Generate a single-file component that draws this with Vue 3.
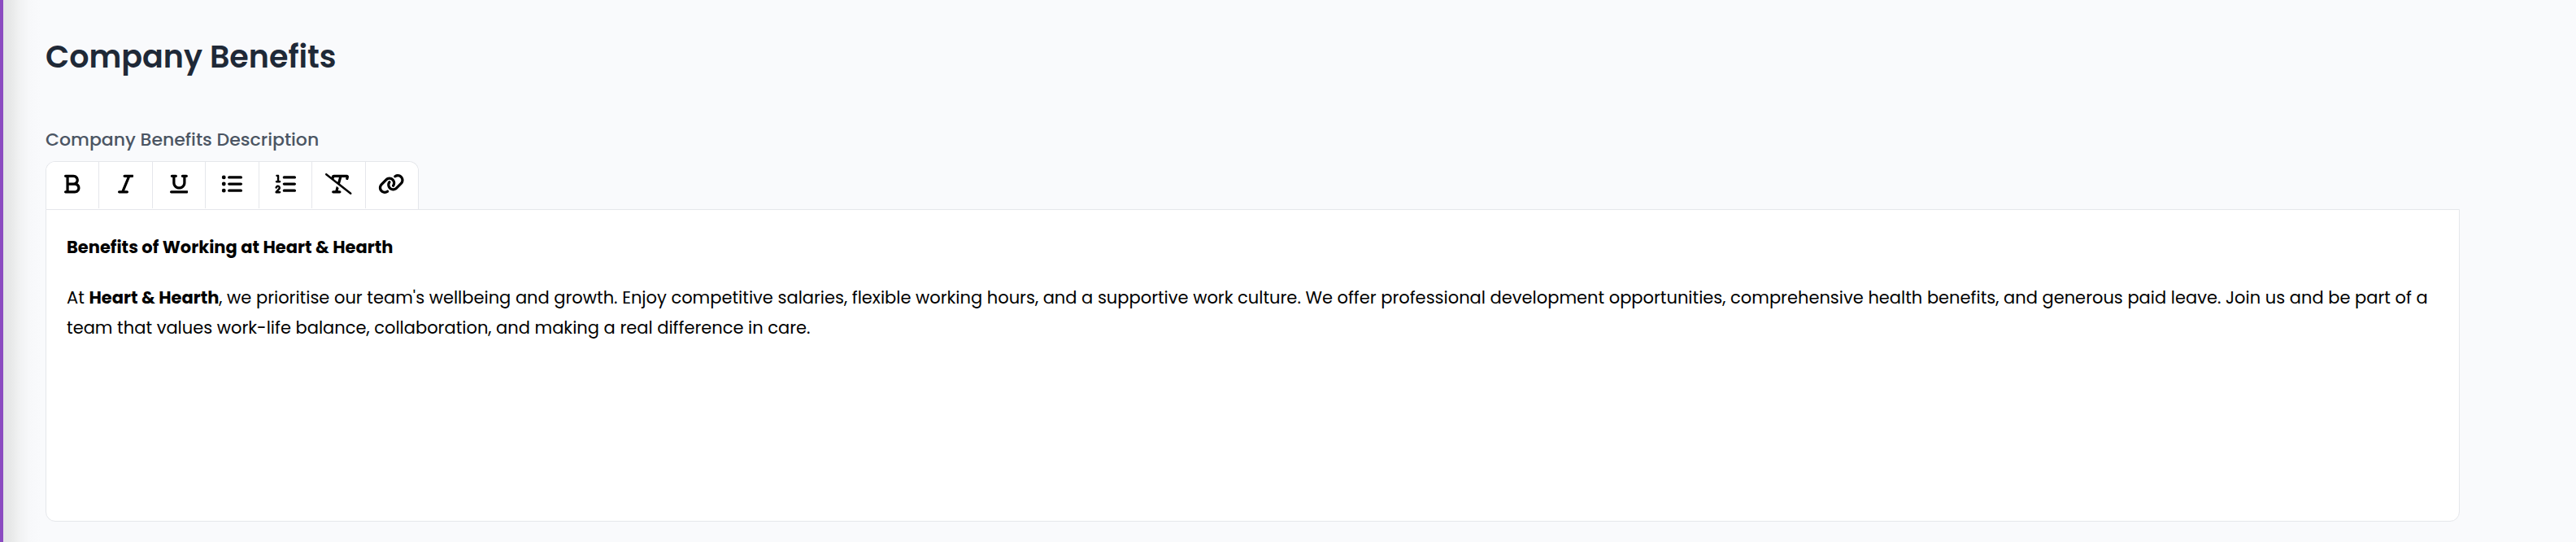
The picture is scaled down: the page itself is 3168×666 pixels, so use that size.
<script setup>
const tools = [
  {
    name: 'Bold',
    width: 384,
    d: 'M0 64C0 46.3 14.3 32 32 32H80 96 224c70.7 0 128 57.3 128 128c0 31.3-11.3 60.1-30 82.3c37.1 22.4 62 63.1 62 109.7c0 70.7-57.3 128-128 128H96 80 32c-17.7 0-32-14.3-32-32s14.3-32 32-32H48V256 96H32C14.3 96 0 81.7 0 64zM224 224c35.3 0 64-28.7 64-64s-28.7-64-64-64H112V224H224zM112 288V416H256c35.3 0 64-28.7 64-64s-28.7-64-64-64H224 112z',
  },
  {
    name: 'Italic',
    width: 384,
    d: 'M128 64c0-17.7 14.3-32 32-32H352c17.7 0 32 14.3 32 32s-14.3 32-32 32H293.3L160 416h64c17.7 0 32 14.3 32 32s-14.3 32-32 32H32c-17.7 0-32-14.3-32-32s14.3-32 32-32H90.7L224 96H160c-17.7 0-32-14.3-32-32z',
  },
  {
    name: 'Underline',
    width: 448,
    d: 'M16 64c0-17.7 14.3-32 32-32h96c17.7 0 32 14.3 32 32s-14.3 32-32 32H128V224c0 53 43 96 96 96s96-43 96-96V96H304c-17.7 0-32-14.3-32-32s14.3-32 32-32h96c17.7 0 32 14.3 32 32s-14.3 32-32 32H384V224c0 88.4-71.6 160-160 160s-160-71.6-160-160V96H48C30.3 96 16 81.7 16 64zM0 448c0-17.7 14.3-32 32-32H416c17.7 0 32 14.3 32 32s-14.3 32-32 32H32c-17.7 0-32-14.3-32-32z',
  },
  {
    name: 'Bulleted list',
    width: 512,
    d: 'M64 144a48 48 0 1 0 0-96 48 48 0 1 0 0 96zM192 64c-17.7 0-32 14.3-32 32s14.3 32 32 32H480c17.7 0 32-14.3 32-32s-14.3-32-32-32H192zm0 160c-17.7 0-32 14.3-32 32s14.3 32 32 32H480c17.7 0 32-14.3 32-32s-14.3-32-32-32H192zm0 160c-17.7 0-32 14.3-32 32s14.3 32 32 32H480c17.7 0 32-14.3 32-32s-14.3-32-32-32H192zM64 464a48 48 0 1 0 0-96 48 48 0 1 0 0 96zm48-208a48 48 0 1 0-96 0 48 48 0 1 0 96 0z',
  },
  {
    name: 'Numbered list',
    width: 512,
    d: 'M24 56c0-13.3 10.7-24 24-24H80c13.3 0 24 10.7 24 24V176h16c13.3 0 24 10.7 24 24s-10.7 24-24 24H40c-13.3 0-24-10.7-24-24s10.7-24 24-24H56V80H48C34.7 80 24 69.3 24 56zM86.7 341.2c-6.5-7.4-18.3-6.9-24 1.2L51.5 357.9c-7.7 10.8-22.7 13.3-33.5 5.6s-13.3-22.7-5.6-33.5l11.1-15.6c23.7-33.2 72.3-35.6 99.2-4.9c21.3 24.4 20.8 60.9-1.1 84.7L86.8 432H120c13.3 0 24 10.7 24 24s-10.7 24-24 24H32c-9.5 0-18.2-5.6-22-14.4s-2.1-18.9 4.3-25.9l72-78c5.3-5.8 5.4-14.6 .3-20.5zM224 64H480c17.7 0 32 14.3 32 32s-14.3 32-32 32H224c-17.7 0-32-14.3-32-32s14.3-32 32-32zm0 160H480c17.7 0 32 14.3 32 32s-14.3 32-32 32H224c-17.7 0-32-14.3-32-32s14.3-32 32-32zm0 160H480c17.7 0 32 14.3 32 32s-14.3 32-32 32H224c-17.7 0-32-14.3-32-32s14.3-32 32-32z',
  },
  {
    name: 'Clear formatting',
    width: 640,
    d: 'M38.8 5.1C28.4-3.1 13.3-1.2 5.1 9.2S-1.2 34.7 9.2 42.9l592 464c10.4 8.2 25.5 6.3 33.7-4.1s6.3-25.5-4.1-33.7L355.7 253.5 400.2 96H503L497 120.2c-4.3 17.1 6.1 34.5 23.3 38.8s34.5-6.1 38.8-23.3l11-44.1C577.6 61.3 554.7 32 523.5 32H376.1h-.3H204.5c-22 0-41.2 15-46.6 36.4l-6.3 25.2L38.8 5.1zm168 131.7c.1-.3 .2-.7 .3-1L217 96H333.7L301.3 211.5 206.8 136.8zM243.3 416H192c-17.7 0-32 14.3-32 32s14.3 32 32 32H352c17.7 0 32-14.3 32-32s-14.3-32-32-32H309.8l17.6-62.1L272.9 311 243.3 416z',
  },
  {
    name: 'Link',
    width: 640,
    d: 'M579.8 267.7c56.5-56.5 56.5-148 0-204.5c-50-50-128.8-56.5-186.3-15.4l-1.6 1.1c-14.4 10.3-17.7 30.3-7.4 44.6s30.3 17.7 44.6 7.4l1.6-1.1c32.1-22.9 76-19.3 103.8 8.6c31.5 31.5 31.5 82.5 0 114L422.3 334.8c-31.5 31.5-82.5 31.5-114 0c-27.9-27.9-31.5-71.8-8.6-103.8l1.1-1.6c10.3-14.4 6.9-34.4-7.4-44.6s-34.4-6.9-44.6 7.4l-1.1 1.6C206.5 251.2 213 330 263 380c56.5 56.5 148 56.5 204.5 0L579.8 267.7zM60.2 244.3c-56.5 56.5-56.5 148 0 204.5c50 50 128.8 56.5 186.3 15.4l1.6-1.1c14.4-10.3 17.7-30.3 7.4-44.6s-30.3-17.7-44.6-7.4l-1.6 1.1c-32.1 22.9-76 19.3-103.8-8.6C74 372 74 321 105.5 289.5L217.7 177.2c31.5-31.5 82.5-31.5 114 0c27.9 27.9 31.5 71.8 8.6 103.9l-1.1 1.6c-10.3 14.4-6.9 34.4 7.4 44.6s34.4 6.9 44.6-7.4l1.1-1.6C433.5 260.8 427 182 377 132c-56.5-56.5-148-56.5-204.5 0L60.2 244.3z',
  },
]
</script>

<template>
  <main class="page">
    <h1 class="title">Company Benefits</h1>
    <section class="field">
      <label id="benefits-label" class="label">Company Benefits Description</label>
      <div class="toolbar" role="toolbar" aria-label="Text formatting">
        <button v-for="tool in tools" :key="tool.name" type="button" class="tool" :aria-label="tool.name">
          <svg class="icon" :viewBox="`0 0 ${tool.width} 512`" aria-hidden="true">
            <path :d="tool.d" />
          </svg>
        </button>
      </div>
      <div class="editor" contenteditable="true" role="textbox" aria-multiline="true" aria-labelledby="benefits-label" spellcheck="false">
        <p><strong>Benefits of Working at Heart &amp; Hearth</strong></p>
        <p>At <strong>Heart &amp; Hearth</strong>, we prioritise our team's wellbeing and growth. Enjoy competitive salaries, flexible working hours, and a supportive work culture. We offer professional development opportunities, comprehensive health benefits, and generous paid leave. Join us and be part of a team that values work-life balance, collaboration, and making a real difference in care.</p>
      </div>
    </section>
  </main>
</template>

<style>
body {
  margin: 0;
  background: #f9fafc;
}
</style>

<style scoped>
.page {
  box-sizing: border-box;
  min-height: 100vh;
  padding: 40px 143px 24px 52px;
  border-left: 4px solid #8b4bc1;
  background: linear-gradient(to right, #e3e4e6, #e8e9e9 10px, #f1f2f3 20px, #f7f8fa 32px, #f9fafc 46px);
  font-family: Poppins, Inter, "Open Sans", sans-serif;
}

.title {
  margin: 0;
  color: #1f2937;
  font-size: 38px;
  font-weight: 600;
  line-height: 60px;
}

.field {
  margin-top: 52px;
}

.label {
  display: block;
  margin-bottom: 6px;
  color: #4b5563;
  font-size: 22px;
  font-weight: 500;
  line-height: 40px;
}

.toolbar {
  display: flex;
  box-sizing: border-box;
  width: 459px;
  max-width: 100%;
  overflow: hidden;
  border: 1px solid #e5e7eb;
  border-bottom: 0;
  border-radius: 12px 12px 0 0;
  background: #fff;
}

.tool {
  display: flex;
  flex: 1;
  align-items: center;
  justify-content: center;
  box-sizing: border-box;
  height: 57px;
  margin: 0 0 1px;
  padding: 0 0 3px;
  border: 0;
  background: #fff;
  color: #000;
  cursor: pointer;
}

.tool + .tool {
  border-left: 1px solid #e5e7eb;
}

.icon {
  height: 26px;
  fill: currentColor;
}

.editor {
  box-sizing: border-box;
  min-height: 384px;
  padding: 27px 25px;
  border: 1px solid #e5e7eb;
  border-radius: 0 0 12px 12px;
  outline: none;
  background: #fff;
  color: #000;
  font-size: 21px;
  line-height: 37px;
}

.editor p {
  margin: 0 0 25px;
}

.editor strong {
  font-weight: 700;
}
</style>
